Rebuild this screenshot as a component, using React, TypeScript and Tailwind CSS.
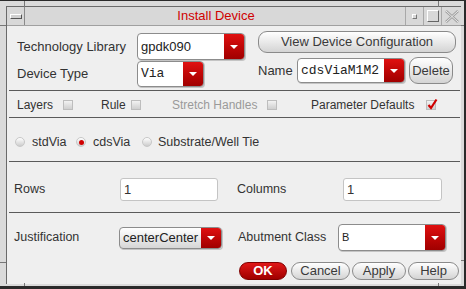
import React from 'react'

const sans = "font-['Liberation_Sans',Arial,sans-serif]"
const mono = "font-['Liberation_Mono','Courier_New',monospace]"

function Arrow() {
  return (
    <div className="flex h-full w-[20px] shrink-0 items-center justify-center bg-gradient-to-b from-[#e01010] to-[#a00000]">
      <div className="h-0 w-0 border-x-[4px] border-t-[4px] border-x-transparent border-t-white" />
    </div>
  )
}

function Combo({ w, h, text, font = sans, size = 'text-[13px]', gray = false }: { w: string; h: string; text: string; font?: string; size?: string; gray?: boolean }) {
  return (
    <div
      className={`flex ${w} ${h} overflow-hidden rounded-[4px] border border-[#8c8c8c] shadow-[1px_1px_0_#c4c4c4] ${
        gray ? 'bg-gradient-to-b from-white to-[#d6d6d6]' : 'bg-white'
      }`}
    >
      <span className={`flex flex-1 items-center pl-[3px] ${font} ${size} text-[#222]`}>{text}</span>
      <Arrow />
    </div>
  )
}

function Btn({ w, h, label, red = false }: { w: string; h: string; label: string; red?: boolean }) {
  return (
    <div
      className={`flex ${w} ${h} items-center justify-center rounded-[9px] border ${
        red
          ? 'border-[#800000] bg-gradient-to-b from-[#e01818] to-[#a00000] font-bold text-white'
          : 'border-[#8a8a8a] bg-gradient-to-b from-white to-[#d4d4d4] text-[#3a3a3a]'
      } ${sans} text-[13px]`}
    >
      {label}
    </div>
  )
}

function Check({ checked = false }: { checked?: boolean }) {
  return (
    <div className="relative h-[10px] w-[10px] shrink-0 border border-[#bdbdbd] bg-gradient-to-b from-[#f2f2f2] to-[#cfcfcf]">
      {checked && (
        <svg className="absolute -top-[3px] left-0" width="11" height="12" viewBox="0 0 11 12">
          <path d="M1.5 7 L4 10 L9.5 1.5" fill="none" stroke="#d00000" strokeWidth="2.2" />
        </svg>
      )}
    </div>
  )
}

function Radio({ on = false }: { on?: boolean }) {
  return (
    <div className="flex h-[10px] w-[10px] shrink-0 items-center justify-center rounded-full border border-[#c8c8c8] bg-gradient-to-b from-white to-[#cccccc]">
      {on && <div className="h-[5px] w-[5px] rounded-full bg-[#d00000]" />}
    </div>
  )
}

function Sep() {
  return <div className="ml-[2px] mr-[1px] h-px bg-[#5a5a5a]" />
}

export default function App() {
  return (
    <div className={`relative h-[289px] w-[466px] overflow-hidden border-t border-r-2 border-b-[3px] border-[#2a2a2a] bg-[#dadada] ${sans}`}>
      {/* frame corner marks */}
      <div className="absolute left-[24px] top-0 h-[6px] w-px bg-[#777]" />
      <div className="absolute left-[438px] top-0 h-[6px] w-px bg-[#777]" />
      <div className="absolute left-0 top-[24px] h-px w-[6px] bg-[#777]" />
      <div className="absolute left-0 top-[261px] h-px w-[6px] bg-[#777]" />
      <div className="absolute right-0 top-[24px] h-px w-[3px] bg-[#777]" />
      <div className="absolute right-0 top-[259px] h-px w-[3px] bg-[#777]" />
      <div className="absolute bottom-0 left-[24px] h-[3px] w-px bg-[#777]" />
      <div className="absolute bottom-0 left-[438px] h-[3px] w-px bg-[#777]" />

      <div className="ml-[6px] mt-[5px] mr-[3px] flex h-[278px] flex-col border-l border-t border-[#6a6a6a]">
        {/* title bar */}
        <div className="flex h-[19px] shrink-0 items-center border-b border-[#a0a0a0] bg-[#d8d8d8]">
          <div className="flex h-full w-[18px] items-center justify-center border-r border-[#8a8a8a]">
            <div className="h-[5px] w-[12px] border border-[#555] border-t-white border-l-white bg-[#d0d0d0]" />
          </div>
          <div className="flex-1 pl-[2px] text-center text-[13px] text-[#d00000]">Install Device</div>
          <div className="flex h-full w-[18px] items-center justify-center border-l border-[#a8a8a8]">
            <div className="h-[5px] w-[5px] border border-[#777] border-t-white border-l-white" />
          </div>
          <div className="flex h-full w-[18px] items-center justify-center border-l border-[#a8a8a8]">
            <div className="h-[12px] w-[12px] border border-[#666] border-t-white border-l-white" />
          </div>
          <div className="flex h-full w-[20px] items-center justify-center border-l border-[#a8a8a8]">
            <svg width="14" height="13" viewBox="0 0 14 13">
              <path d="M1 1 L13 12 M13 1 L1 12" stroke="#a0a0a0" strokeWidth="2.5" />
              <path d="M1 1 L13 12 M13 1 L1 12" stroke="#eaeaea" strokeWidth="1" />
            </svg>
          </div>
        </div>

        {/* content */}
        <div className="flex flex-1 flex-col bg-[#efefef] text-[13px] text-[#333]">
          <div className="flex h-[64px] shrink-0 pt-[5px]">
            <div className="flex flex-col pl-[10px]">
              <div className="mt-[2px] flex h-[27px] items-center">
                <span className="w-[120px]">Technology Library</span>
                <Combo w="w-[108px]" h="h-[27px]" text="gpdk090" />
              </div>
              <div className="mt-px flex h-[26px] items-center">
                <span className="w-[120px]">Device Type</span>
                <Combo w="w-[67px]" h="h-[26px]" text="Via" font={mono} />
              </div>
            </div>
            <div className="ml-[13px] flex flex-col">
              <Btn w="w-[198px]" h="h-[22px]" label="View Device Configuration" />
              <div className="mt-[4px] flex items-center">
                <span className="w-[39px]">Name</span>
                <Combo w="w-[108px]" h="h-[25px]" text="cdsViaM1M2" font={mono} />
                <div className="ml-[4px]">
                  <Btn w="w-[44px]" h="h-[27px]" label="Delete" />
                </div>
              </div>
            </div>
          </div>
          <Sep />
          <div className="flex h-[26px] shrink-0 items-center pl-[10px] pt-px text-[12px]">
            <span className="w-[46px]">Layers</span>
            <Check />
            <span className="ml-[28px] w-[30px]">Rule</span>
            <Check />
            <span className="ml-[31px] w-[95px] text-[#9a9a9a]">Stretch Handles</span>
            <Check />
            <span className="ml-[34px] w-[115px]">Parameter Defaults</span>
            <Check checked />
          </div>
          <Sep />
          <div className="flex h-[43px] shrink-0 items-center pl-[8px] pt-[5px] text-[12.5px]">
            <Radio />
            <span className="ml-[7px] w-[44px]">stdVia</span>
            <Radio on />
            <span className="ml-[7px] w-[49px]">cdsVia</span>
            <Radio />
            <span className="ml-[6px]">Substrate/Well Tie</span>
          </div>
          <Sep />
          <div className="flex h-[50px] shrink-0 items-start pl-[7px] pt-[16px] text-[12.5px]">
            <div className="flex h-[23px] items-center">
              <span className="w-[106px]">Rows</span>
              <div className="flex h-[23px] w-[98px] items-center rounded-[3px] border border-[#c4c4c4] bg-white pl-[3px] text-[13px]">1</div>
            </div>
            <div className="ml-[19px] flex h-[23px] items-center">
              <span className="w-[106px]">Columns</span>
              <div className="flex h-[23px] w-[99px] items-center rounded-[3px] border border-[#c4c4c4] bg-white pl-[3px] text-[13px]">1</div>
            </div>
          </div>
          <Sep />
          <div className="flex flex-1 flex-col pl-[7px] pt-[11px]">
            <div className="flex h-[27px] items-center text-[12.5px]">
              <span className="w-[105px]">Justification</span>
              <Combo w="w-[103px]" h="h-[22px]" text="centerCenter" gray />
              <span className="ml-[16px] w-[100px]">Abutment Class</span>
              <Combo w="w-[108px]" h="h-[27px]" text="B" size="text-[11px]" />
            </div>
            <div className="ml-[225px] mt-[11px] flex h-[18px] gap-[2px]">
              <Btn w="w-[48px]" h="h-[18px]" label="OK" red />
              <div className="ml-[2px]"><Btn w="w-[59px]" h="h-[18px]" label="Cancel" /></div>
              <Btn w="w-[54px]" h="h-[18px]" label="Apply" />
              <Btn w="w-[51px]" h="h-[18px]" label="Help" />
            </div>
          </div>
        </div>
      </div>
    </div>
  )
}
